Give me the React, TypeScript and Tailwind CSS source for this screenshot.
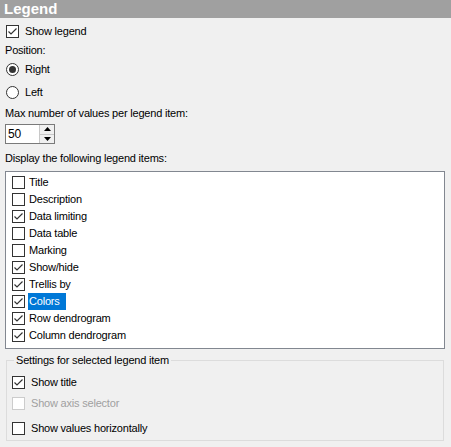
import React from "react";

const font = { fontFamily: '"Liberation Sans", Arial, sans-serif' };

function Check({ checked, disabled }: { checked?: boolean; disabled?: boolean }) {
  return (
    <span
      className={`inline-block w-[13px] h-[13px] shrink-0 border bg-white relative ${
        disabled ? "border-[#cccccc]" : "border-[#333333]"
      }`}
    >
      {checked && (
        <svg className="absolute left-0 top-0" width="11" height="11" viewBox="0 0 11 11">
          <path d="M1.5 5.5 L4 8 L9.5 2.5" fill="none" stroke="#333333" strokeWidth="1.2" />
        </svg>
      )}
    </span>
  );
}

function Radio({ checked }: { checked?: boolean }) {
  return (
    <span className="inline-flex items-center justify-center w-[13px] h-[13px] rounded-full border border-[#333333] bg-white shrink-0">
      {checked && <span className="w-[7px] h-[7px] rounded-full bg-[#333333]" />}
    </span>
  );
}

const items: [string, boolean][] = [
  ["Title", false],
  ["Description", false],
  ["Data limiting", true],
  ["Data table", false],
  ["Marking", false],
  ["Show/hide", true],
  ["Trellis by", true],
  ["Colors", true],
  ["Row dendrogram", true],
  ["Column dendrogram", true],
];

export default function App() {
  return (
    <div
      className="w-[451px] h-[447px] bg-[#f0f0f0] text-[11px] tracking-[-0.2px] text-black overflow-hidden"
      style={font}
    >
      <div className="h-[18px] bg-[#a0a0a0] text-white font-bold text-[15px] tracking-normal leading-[18px] pl-[4px]">
        Legend
      </div>
      <div className="pl-[6px] pt-[7px]">
        <div className="flex items-center gap-[6px] h-[13px]">
          <Check checked />
          <span>Show legend</span>
        </div>
        <div className="h-[14px] mt-[5px] -ml-[1px] leading-[14px]">Position:</div>
        <div className="flex items-center gap-[6px] h-[14px] mt-[5px]">
          <Radio checked />
          <span>Right</span>
        </div>
        <div className="flex items-center gap-[6px] h-[14px] mt-[9px]">
          <Radio />
          <span>Left</span>
        </div>
        <div className="h-[14px] mt-[7px] -ml-[1px] leading-[14px]">Max number of values per legend item:</div>
        <div className="mt-[4px] -ml-[1px] flex w-[50px] h-[20px] border border-[#7a7a7a] bg-white">
          <div className="flex-1 pl-[2px] leading-[18px] text-[12px]">50</div>
          <div className="w-[15px] flex flex-col border-l border-[#c8c8c8] bg-[#f0f0f0]">
            <div className="flex-1 flex items-center justify-center border-b border-[#c8c8c8]">
              <svg width="7" height="4" viewBox="0 0 7 4">
                <path d="M3.5 0 L7 4 L0 4 Z" fill="#000" />
              </svg>
            </div>
            <div className="flex-1 flex items-center justify-center">
              <svg width="7" height="4" viewBox="0 0 7 4">
                <path d="M0 0 L7 0 L3.5 4 Z" fill="#000" />
              </svg>
            </div>
          </div>
        </div>
        <div className="h-[14px] mt-[7px] -ml-[1px] leading-[14px]">Display the following legend items:</div>
        <div className="mt-[6px] -ml-[1px] w-[440px] h-[178px] border border-[#828790] bg-white pt-[2px] pl-[6px]">
          {items.map(([label, c]) => (
            <div key={label} className="flex items-center h-[17px] gap-[3px]">
              <Check checked={c} />
              <span
                className={`px-[1px] h-[17px] leading-[17px] ${
                  label === "Colors" ? "bg-[#0078d7] text-white pr-[6px]" : ""
                }`}
              >
                {label}
              </span>
            </div>
          ))}
        </div>
        <div className="relative mt-[11px] w-[438px] h-[81px] border border-[#dcdcdc] pl-[5px] pt-[15px]">
          <span className="absolute left-[7px] -top-[8px] px-[2px] bg-[#f0f0f0] leading-[14px]">
            Settings for selected legend item
          </span>
          <div className="flex items-center gap-[6px] h-[13px]">
            <Check checked />
            <span>Show title</span>
          </div>
          <div className="flex items-center gap-[6px] h-[13px] mt-[8px] text-[#a0a0a0]">
            <Check disabled />
            <span>Show axis selector</span>
          </div>
          <div className="flex items-center gap-[6px] h-[13px] mt-[12px]">
            <Check />
            <span>Show values horizontally</span>
          </div>
        </div>
      </div>
    </div>
  );
}
